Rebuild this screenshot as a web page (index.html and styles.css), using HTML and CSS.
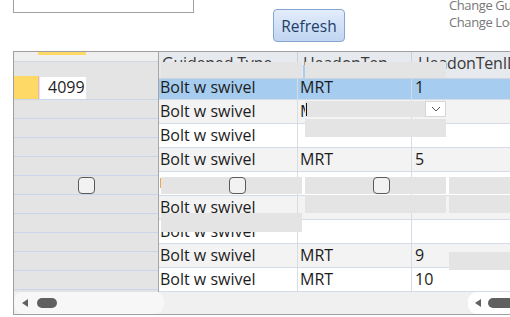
FILE: index.html
```html
<!DOCTYPE html>
<html>
<head>
<meta charset="utf-8">
<link rel="stylesheet" href="styles.css">
</head>
<body>
<div class="top">
  <div class="textbox"></div>
  <button class="refresh">Refresh</button>
  <div class="links">
    <div>Change Guided Type</div>
    <div>Change Location</div>
  </div>
</div>
<div class="grid">
  <div class="main">
    <div class="sel">
      <div class="selhead"><span class="mark"></span></div>
      <div class="selgap"></div>
      <div class="selrow cur"><span class="yel"></span><span class="idbox">4099</span></div>
      <div class="selrow"></div>
      <div class="selrow"></div>
      <div class="selrow"></div>
      <div class="selrow"></div>
      <div class="selrow"><span class="chk"></span></div>
      <div class="selrow"></div>
      <div class="selrow"></div>
      <div class="selrow"></div>
      <div class="selrow"></div>
      <div class="selrow"></div>
    </div>
    <div class="data">
      <div class="drow head"><div class="c c1">Guidened Type</div><div class="c c2">HeadonTen</div><div class="c c3">HeadonTenID</div></div>
      <div class="drow selected"><div class="c c1">Bolt w swivel</div><div class="c c2">MRT</div><div class="c c3">1</div></div>
      <div class="drow alt"><div class="c c1">Bolt w swivel</div><div class="c c2">MRT</div><div class="c c3"></div></div>
      <div class="drow"><div class="c c1">Bolt w swivel</div><div class="c c2"></div><div class="c c3"></div></div>
      <div class="drow alt"><div class="c c1">Bolt w swivel</div><div class="c c2">MRT</div><div class="c c3">5</div></div>
      <div class="drow"><div class="c c1"></div><div class="c c2"></div><div class="c c3"></div></div>
      <div class="drow alt"><div class="c c1">Bolt w swivel</div><div class="c c2"></div><div class="c c3"></div></div>
      <div class="drow"><div class="c c1">Bolt w swivel</div><div class="c c2"></div><div class="c c3"></div></div>
      <div class="drow alt"><div class="c c1">Bolt w swivel</div><div class="c c2">MRT</div><div class="c c3">9</div></div>
      <div class="drow"><div class="c c1">Bolt w swivel</div><div class="c c2">MRT</div><div class="c c3">10</div></div>
    </div>
  </div>
  <div class="scroll">
    <div class="sleft"><span class="arrow"></span><span class="thumb"></span></div>
    <div class="sright"><span class="arrow"></span><span class="thumb wide"></span></div>
  </div>

  <div class="patch p1"></div>
  <div class="patch p2"></div>
  <div class="bluetick"></div>
  <div class="patch p3"></div>
  <div class="dropdown"><svg width="10" height="6" viewBox="0 0 10 6"><polyline points="1,1 5,5 9,1" fill="none" stroke="#555" stroke-width="1"/></svg></div>
  <div class="caret"></div>
  <div class="patch p4"></div>
  <div class="ortick"></div>
  <div class="patch p5"><span class="chk"></span></div>
  <div class="patch p6"><span class="chk"></span></div>
  <div class="patch p7"></div>
  <div class="patch p8"></div>
  <div class="patch p9"></div>
  <div class="patch p10"></div>
  <div class="patch p11"></div>
</div>
</body>
</html>
```

FILE: styles.css
```css
* { box-sizing: border-box; }
body {
  margin: 0;
  width: 510px;
  height: 317px;
  overflow: hidden;
  background: #fff;
  font-family: "Open Sans", "Noto Sans", sans-serif;
}
.top {
  display: flex;
  align-items: flex-start;
  height: 51px;
}
.textbox {
  margin-left: 13px;
  width: 181px;
  height: 13px;
  border: 1px solid #a0a0a0;
  border-top: none;
  background: #fff;
  flex: none;
}
.refresh {
  margin-left: 79px;
  margin-top: 9px;
  width: 72px;
  height: 33px;
  border: 1px solid #86a6d2;
  border-radius: 4px;
  background: linear-gradient(#e3edfb, #c0d5f2);
  color: #223e66;
  font-family: "Open Sans", sans-serif;
  font-size: 15.5px;
  padding: 0;
  flex: none;
}
.links {
  margin-left: 104px;
  margin-top: -3px;
  font-size: 13px;
  letter-spacing: -0.4px;
  line-height: 17px;
  color: #777;
  white-space: nowrap;
  flex: none;
}
.grid {
  position: relative;
  margin-left: 13px;
  width: 520px;
  border-top: 1px solid #a0a0a0;
  border-left: 1px solid #a0a0a0;
  border-bottom: 1px solid #a0a0a0;
}
.main {
  display: flex;
  height: 240px;
  overflow: hidden;
}
.sel {
  flex: none;
  width: 145px;
  border-right: 1px solid #a6a6a6;
  background: #e4e4e4;
}
.selhead {
  height: 10px;
  background: #efefef;
  border-bottom: 1px solid #cfd6df;
}
.mark {
  display: block;
  margin-left: 24px;
  width: 48px;
  height: 3px;
  background: #ffd966;
}
.selgap { height: 14px; }
.selrow {
  height: 19px;
  border-bottom: 1px solid #c9d6ea;
  display: flex;
  align-items: center;
  justify-content: center;
}
.selrow.cur {
  height: 24px;
  justify-content: flex-start;
  align-items: stretch;
}
.yel {
  width: 25px;
  background: #ffd966;
  border-right: 1px solid #f0b4ae;
}
.idbox {
  margin-left: 1px;
  margin-top: 1px;
  width: 46px;
  background: #fff;
  font-size: 16px;
  line-height: 21px;
  padding-left: 8px;
  color: #1e1e1e;
}
.chk {
  display: block;
  width: 17px;
  height: 17px;
  border: 1.5px solid #5a5a5a;
  border-radius: 4px;
  background: #f2f2f2;
}
.data { flex: 1; }
.drow {
  display: flex;
  height: 24px;
  border-bottom: 1px solid #d5dce7;
  font-size: 16px;
  line-height: 23px;
  color: #1c1c1c;
  background: #fff;
  white-space: nowrap;
}
.drow.alt { background: #f3f3f3; }
.drow.head {
  height: 27px;
  background: #e6e9ee;
  border-bottom: 1px solid #cdd4de;
  line-height: 22px;
  color: #3a3a3a;
  letter-spacing: -0.2px;
}
.drow.selected {
  height: 21px;
  line-height: 16px;
  background: #a6cdf0;
}
.c { overflow: hidden; }
.c1 { width: 139px; border-right: 1px solid #d5dce7; padding-left: 1px; }
.c2 { width: 114px; border-right: 1px solid #d5dce7; padding-left: 2px; }
.c3 { flex: 1; padding-left: 3px; }
.head .c1 { padding-left: 3px; border-right-color: #c9d0da; }
.head .c2 { padding-left: 5px; border-right-color: #c9d0da; }
.head .c3 { padding-left: 6px; }
.scroll {
  height: 22px;
  background: #f0f0f0;
  display: flex;
  align-items: center;
}
.sleft, .sright {
  height: 22px;
  display: flex;
  align-items: center;
  border-radius: 9px;
}
.sleft { width: 150px; background: #f7f7f7; }
.sright { width: 60px; margin-left: 304px; background: #fff; }
.arrow {
  width: 0;
  height: 0;
  border-top: 4px solid transparent;
  border-bottom: 4px solid transparent;
  border-right: 6px solid #616161;
  margin-left: 8px;
}
.sright .arrow { margin-left: 7px; }
.thumb {
  margin-left: 9px;
  width: 20px;
  height: 10px;
  border-radius: 5px;
  background: #606060;
}
.thumb.wide { margin-left: 7px; width: 30px; }

.patch {
  position: absolute;
  background: #e4e4e4;
  display: flex;
  justify-content: center;
  align-items: center;
}
.p1 { left: 147px; top: 10px; width: 141px; height: 16px; }
.p2 { left: 291px; top: 10px; width: 141px; height: 16px; }
.bluetick { position: absolute; left: 289px; top: 13px; width: 2px; height: 13px; background: #a9cdef; }
.p3 { left: 291px; top: 49px; width: 120px; height: 16px; }
.dropdown {
  position: absolute;
  left: 411px; top: 49px; width: 21px; height: 16px;
  background: #fff;
  border: 1px solid #d6d6d6;
  display: flex;
  align-items: center;
  justify-content: center;
}
.caret { position: absolute; left: 292px; top: 51px; width: 1px; height: 13px; background: #111; }
.p4 { left: 291px; top: 67px; width: 141px; height: 18px; }
.ortick { position: absolute; left: 146px; top: 126px; width: 1px; height: 10px; background: #f0a352; }
.p5 { left: 147px; top: 125px; width: 141px; height: 17px; padding-left: 12px; }
.p6 { left: 291px; top: 125px; width: 141px; height: 17px; padding-left: 12px; }
.p7 { left: 435px; top: 125px; width: 80px; height: 17px; }
.p8 { left: 291px; top: 143px; width: 141px; height: 18px; }
.p9 { left: 435px; top: 143px; width: 80px; height: 18px; }
.p10 { left: 147px; top: 161px; width: 141px; height: 19px; }
.p11 { left: 435px; top: 200px; width: 80px; height: 18px; }
```
